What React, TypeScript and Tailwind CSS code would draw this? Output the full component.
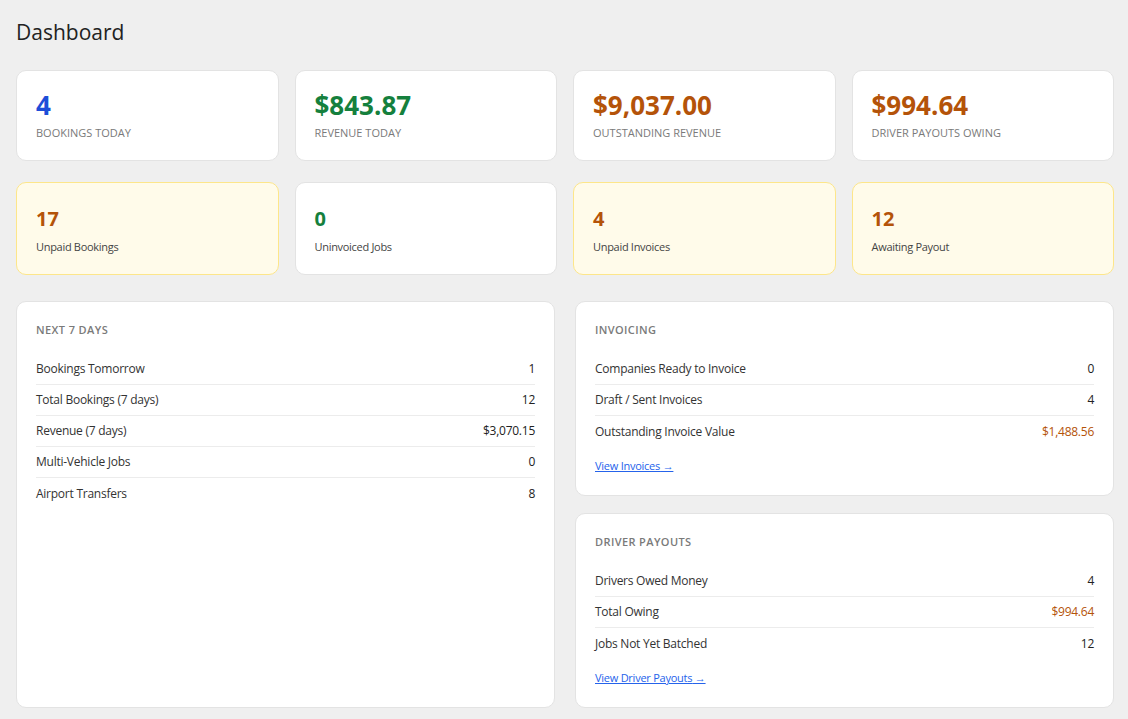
const font = { fontFamily: '"Open Sans", "Noto Sans", sans-serif' };

type Stat = { value: string; label: string; color: string };

const topStats: Stat[] = [
  { value: '4', label: 'Bookings Today', color: 'text-[#1d4ed8]' },
  { value: '$843.87', label: 'Revenue Today', color: 'text-[#15803d]' },
  { value: '$9,037.00', label: 'Outstanding Revenue', color: 'text-[#b45309]' },
  { value: '$994.64', label: 'Driver Payouts Owing', color: 'text-[#b45309]' },
];

const alertStats: (Stat & { warn: boolean })[] = [
  { value: '17', label: 'Unpaid Bookings', color: 'text-[#b45309]', warn: true },
  { value: '0', label: 'Uninvoiced Jobs', color: 'text-[#15803d]', warn: false },
  { value: '4', label: 'Unpaid Invoices', color: 'text-[#b45309]', warn: true },
  { value: '12', label: 'Awaiting Payout', color: 'text-[#b45309]', warn: true },
];

type Row = { label: string; value: string; accent?: boolean };

function Panel({
  title,
  rows,
  link,
  className = '',
}: {
  title: string;
  rows: Row[];
  link?: string;
  className?: string;
}) {
  return (
    <div
      className={`rounded-[10px] border border-[#e3e3e3] bg-white px-[19px] pt-[20px] pb-[22px] ${className}`}
    >
      <h3 className="mb-[16px] text-[11px] font-semibold uppercase leading-[16px] tracking-[0.4px] text-[#7a7a7a]">
        {title}
      </h3>
      <ul>
        {rows.map((r, i) => (
          <li
            key={r.label}
            className={`flex h-[31px] items-center justify-between text-[12px] tracking-[-0.25px] text-[#333] ${i < rows.length - 1 ? 'border-b border-[#ececec]' : ''}`}
          >
            <span>{r.label}</span>
            <span className={r.accent ? 'text-[#b45309]' : 'text-[#222]'}>
              {r.value}
            </span>
          </li>
        ))}
      </ul>
      {link && (
        <a
          href="#"
          className="mt-[11px] inline-block text-[11px] leading-[16px] tracking-[-0.25px] text-[#2563eb] underline"
        >
          {link} →
        </a>
      )}
    </div>
  );
}

export default function App() {
  return (
    <div
      className="min-h-[719px] bg-[#efefef] pt-[17px] pr-[14px] pb-[12px] pl-4 text-[#222]"
      style={font}
    >
      <h1 className="mb-[23px] text-[21px] font-normal leading-[30px] text-[#222]">
        Dashboard
      </h1>

      <div className="mb-[21px] grid grid-cols-4 gap-4">
        {topStats.map((s) => (
          <div
            key={s.label}
            className="h-[91px] rounded-[10px] border border-[#e3e3e3] bg-white px-[19px] pt-[18px]"
          >
            <div className={`text-[26px] font-bold leading-[33px] ${s.color}`}>
              {s.value}
            </div>
            <div className="mt-[3px] text-[11px] uppercase leading-[16px] text-[#7a7a7a]">
              {s.label}
            </div>
          </div>
        ))}
      </div>

      <div className="mb-[26px] grid grid-cols-4 gap-4">
        {alertStats.map((s) => (
          <div
            key={s.label}
            className={`h-[93px] rounded-[10px] border px-[19px] pt-[23px] ${s.warn ? 'border-[#fde68a] bg-[#fffbea]' : 'border-[#e3e3e3] bg-white'}`}
          >
            <div className={`text-[20px] font-bold leading-[26px] ${s.color}`}>
              {s.value}
            </div>
            <div className="mt-[7px] text-[11px] leading-[16px] tracking-[-0.3px] text-[#444]">
              {s.label}
            </div>
          </div>
        ))}
      </div>

      <div className="grid grid-cols-2 gap-5">
        <Panel
          title="Next 7 Days"
          className="h-[407px]"
          rows={[
            { label: 'Bookings Tomorrow', value: '1' },
            { label: 'Total Bookings (7 days)', value: '12' },
            { label: 'Revenue (7 days)', value: '$3,070.15' },
            { label: 'Multi-Vehicle Jobs', value: '0' },
            { label: 'Airport Transfers', value: '8' },
          ]}
        />
        <div className="flex flex-col gap-[17px]">
          <Panel
            title="Invoicing"
            className="h-[195px]"
            link="View Invoices"
            rows={[
              { label: 'Companies Ready to Invoice', value: '0' },
              { label: 'Draft / Sent Invoices', value: '4' },
              { label: 'Outstanding Invoice Value', value: '$1,488.56', accent: true },
            ]}
          />
          <Panel
            title="Driver Payouts"
            className="h-[195px]"
            link="View Driver Payouts"
            rows={[
              { label: 'Drivers Owed Money', value: '4' },
              { label: 'Total Owing', value: '$994.64', accent: true },
              { label: 'Jobs Not Yet Batched', value: '12' },
            ]}
          />
        </div>
      </div>
    </div>
  );
}
